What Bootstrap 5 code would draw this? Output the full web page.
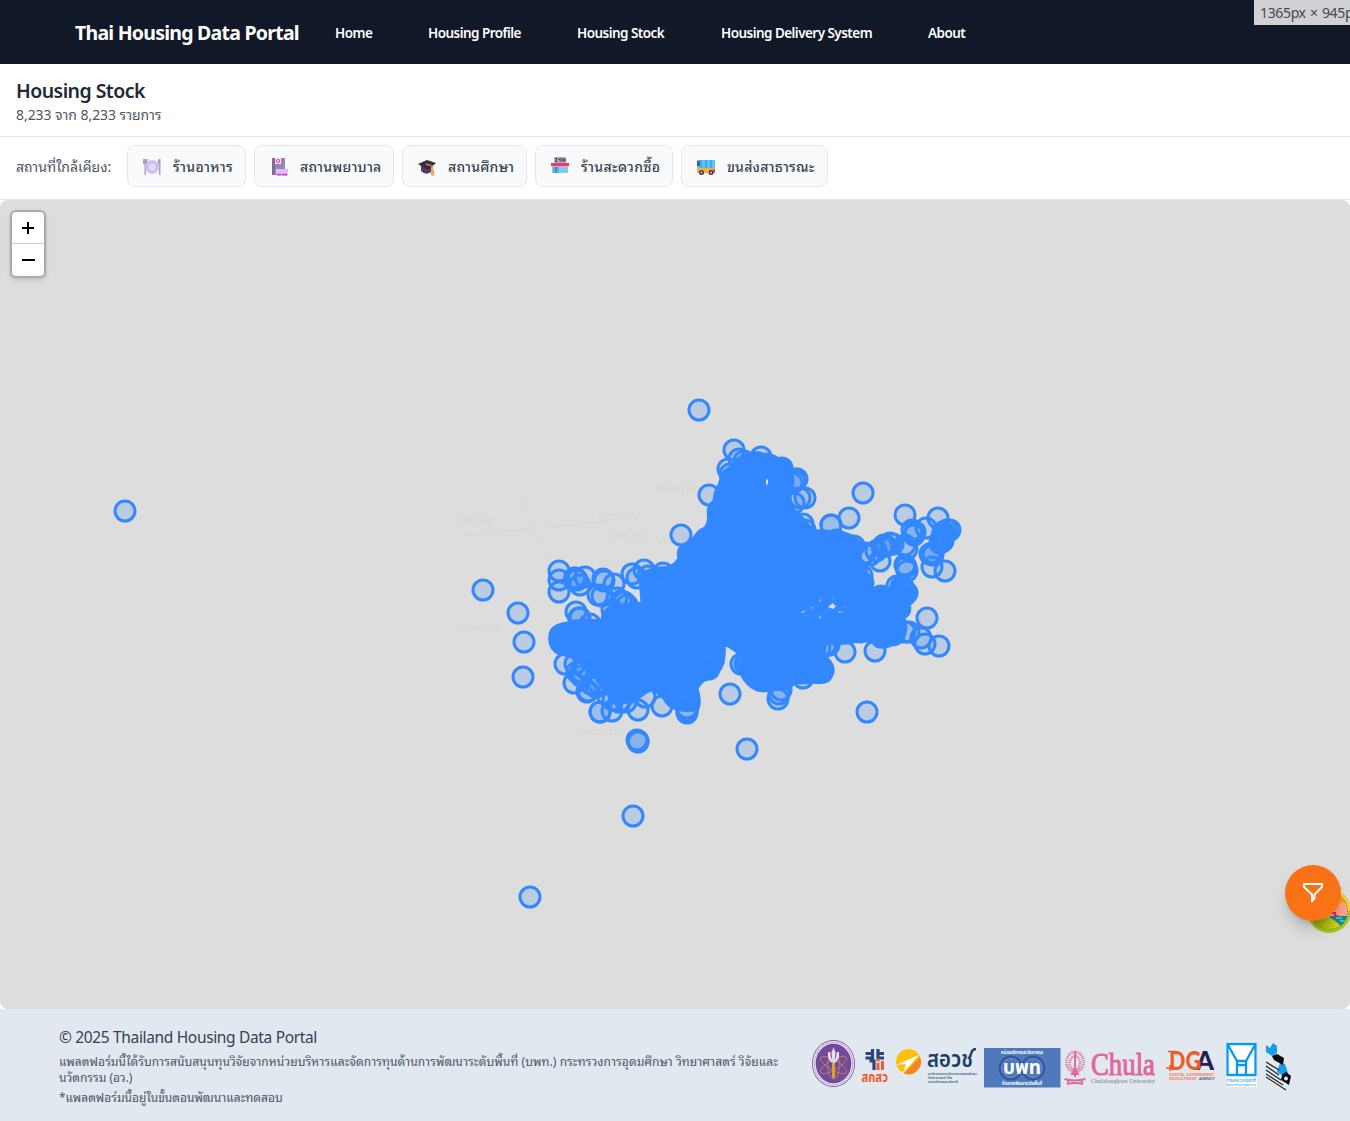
<!DOCTYPE html>
<html lang="th">
<head>
<meta charset="utf-8">
<meta name="viewport" content="width=device-width, initial-scale=1">
<title>Thai Housing Data Portal</title>
<link href="https://cdn.jsdelivr.net/npm/bootstrap@5.3.0/dist/css/bootstrap.min.css" rel="stylesheet">
<style>
body{font-family:"Noto Sans","Noto Sans Thai Looped","Noto Sans Thai",sans-serif;background:#fff;width:1350px;height:1121px;overflow:hidden;position:relative}
.topbar{height:64px;background:#111827;padding-left:75px;color:#fff}
.brand-name{font-size:19.500px;font-weight:700;width:260px;letter-spacing:-.76px;white-space:nowrap;padding-top:2px}
.menu{gap:56px;font-size:13.500px;font-weight:600;padding-top:3px}
.menu a{color:#fff;text-decoration:none;white-space:nowrap;letter-spacing:-.54px}
.m1{width:37px}.m2{width:93px}.m3{width:88px}.m4{width:151px}.m5{width:38px}
.sizetip{position:absolute;right:0;top:0;width:96px;height:25px;background:#d0d1d5;color:#45474c;font-size:14px;line-height:26px;padding-left:6px;overflow:hidden;white-space:nowrap;letter-spacing:-.35px;word-spacing:1px}
.headline{height:73px;border-bottom:1px solid #e5e7eb;padding:13px 16px 0}
.headline h1{font-size:19.500px;line-height:28px;font-weight:600;color:#1f2937;margin:0;letter-spacing:-.55px}
.headline p{font-size:14px;line-height:20px;color:#4b5563;margin:0;letter-spacing:-.05px}
.nearby{height:63px;border-bottom:1px solid #e5e7eb;padding:8px 16px 0;gap:8px;font-size:14px;color:#4b5563}
.nearby-label{width:103px;height:42px;line-height:43px;white-space:nowrap}
.chip{height:42px;border:1px solid #e5e7eb;border-radius:8px;background:#f9fafb;color:#374151;padding-left:14px;gap:11px;font-weight:500;white-space:nowrap;letter-spacing:.2px}
.chip svg{margin-top:2px}
.c1{width:119px;letter-spacing:.3px}.c2{width:140px}.c3{width:125px}.c4{width:138px;letter-spacing:.3px}.c5{width:147px}
.mapbox{height:809px;background:#ddd;border-radius:8px;position:relative;overflow:hidden}
.mapbox>svg{display:block}
.zoomer{position:absolute;left:10px;top:10px;width:36px;height:68px;border:2px solid #aaa;border-radius:6px;background:#fff;box-shadow:0 2px 4px #0002}
.zoomer div{height:32px}
.zoomer div:first-child{border-bottom:1px solid #ccc}
.floater{position:absolute;left:1285px;top:665px;width:56px;height:56px;border-radius:50%;background:#f97316;box-shadow:0 10px 15px -3px #0003,0 4px 6px -4px #0003}
.scenery{position:absolute;left:1306px;top:689px}
.foot{height:112px;background:#e2e8f0;padding:18px 0 0 59px;color:#374151}
.foot-text{width:752px}
.foot-text .copyr{font-size:15.500px;line-height:21px;letter-spacing:-.34px}
.foot-text p{font-size:12px;line-height:16px;margin:6px 0 0;white-space:nowrap;color:#4b5563}
.foot-text p+p{margin-top:4px}
.f1{letter-spacing:.08px}.f3{letter-spacing:0}
.logos{padding-top:10px;font-family:"Noto Sans","Noto Sans Thai",sans-serif}
.logos svg{display:block;flex:none;overflow:visible}
</style>
</head>
<body>
<nav class="topbar d-flex align-items-center">
<div class="brand-name">Thai Housing Data Portal</div>
<div class="menu d-flex"><a class="m1" href="#">Home</a><a class="m2" href="#">Housing Profile</a><a class="m3" href="#">Housing Stock</a><a class="m4" href="#">Housing Delivery System</a><a class="m5" href="#">About</a></div>
</nav>
<div class="sizetip">1365px × 945px</div>
<header class="headline"><h1>Housing Stock</h1><p>8,233 จาก 8,233 รายการ</p></header>
<section class="nearby d-flex">
<div class="nearby-label">สถานที่ใกล้เคียง:</div>
<div class="chip c1 d-flex align-items-center"><svg width="20" height="20" viewBox="0 0 20 20"><path d="M1 2v5h1.500v11h1.500V7H5.500V2zM16 3q2-2 2.500-1v16H17v-7h-1.500z" fill="#aaa0bd"/><circle cx="10.300" cy="10" r="7" fill="#d3c5f3"/><circle cx="10.300" cy="10" r="4.500" fill="#e5d8fb" stroke="#bfaee7"/></svg><span>ร้านอาหาร</span></div>
<div class="chip c2 d-flex align-items-center"><svg width="20" height="20" viewBox="0 0 20 20"><path d="M3 1h13v17H3z" fill="#9b83b3"/><path d="M3 1h3v17H3z" fill="#84699f"/><path d="M6 1h6v6H6z" fill="#fbe4f7"/><circle cx="9" cy="4" r="1.500" stroke="#e03a9c" stroke-width="1.200" fill="#fff"/><path d="M7 12h12v7H7z" fill="#d8c3f4"/><path d="M8 17.500h4m1 0h5" stroke="#dc32ba" stroke-width="1.600"/></svg><span>สถานพยาบาล</span></div>
<div class="chip c3 d-flex align-items-center"><svg width="20" height="20" viewBox="0 0 20 20"><path d="M4 8v6q5 5 10 1V8z" fill="#5a3a70"/><path d="M1 7l9-4 9 3-8 7z" fill="#372b41"/><path d="M9 7l6 2v6" fill="none" stroke="#d98035" stroke-width="1.500"/><path d="M14 13h3v6l-3-1z" fill="#f7a052"/></svg><span>สถานศึกษา</span></div>
<div class="chip c4 d-flex align-items-center"><svg width="20" height="20" viewBox="0 0 20 20"><path d="M4 0h12v6H4z" fill="#bcaeca"/><path d="M5 1.500h2L5.500 4.500H7.500M9 1v2h2m0-2v4M13 1v4m2-4v4m-2-2h2" stroke="#4d3b60" fill="none"/><path d="M2 9h16v7H2z" fill="#c3b3cf"/><path d="M1 6h18v3H1z" fill="#ed3a66"/><path d="M3 10h6v6H3z" fill="#40bce9"/><path d="M6 10v6" stroke="#5466a8"/><path d="M10 11h7v4h-7z" fill="#65d6ee"/></svg><span>ร้านสะดวกซื้อ</span></div>
<div class="chip c5 d-flex align-items-center"><svg width="20" height="20" viewBox="0 0 20 20"><path d="M1 3h18v13H1z" fill="#ffae2b"/><path d="M1 3h18v8H1z" fill="#5ac5fb"/><path d="M5 3v8m5-8v8m5-8v8" stroke="#2f88d8"/><path d="M1 4h3v5H1z" fill="#346ca0"/><path d="M17 12h2v4h-2z" fill="#ef4668"/><circle cx="5.500" cy="15.500" r="2.500" fill="#4a3456"/><circle cx="15" cy="15.500" r="2.500" fill="#4a3456"/><circle cx="5.500" cy="15.500" r="1" fill="#d7c5de"/><circle cx="15" cy="15.500" r="1" fill="#d7c5de"/></svg><span>ขนส่งสาธารณะ</span></div>
</section>
<main class="mapbox">
<svg id="dots" width="1350" height="809" viewBox="0 200 1350 809">
<g opacity=".018" font-size="11" fill="#000"><text x="655" y="492">ปากเกร็ด</text><text x="598" y="520">เสาธงหิน</text><text x="610" y="538">บางใหญ่</text><text x="656" y="544">นนทบุรี</text><text x="598" y="566">ปลายบาง</text><text x="458" y="524">ไร่ขิงพลู</text><text x="458" y="631">สามพราน</text><text x="580" y="735">สมุทรสาคร</text><path d="M456 536L620 520M516 485L548 560M460 572h88" stroke="#000" fill="none" opacity=".6"/></g>
<path fill="#38f" stroke="#38f" stroke-width="3" stroke-linejoin="round" d="M731 467Q741 456 750 454Q757 451 763 454Q772 454 779 459Q788 461 791 467L793 481L789 500Q791 509 798 513L813 531Q824 530 833 532Q847 531 853 538Q862 541 861 548L858 557Q866 567 867 574Q873 582 872 591Q882 587 889 590Q893 580 899 582Q909 580 913 588Q917 597 909 605Q912 613 904 618Q908 627 904 637Q901 645 892 645Q884 649 876 646Q871 639 861 642Q853 641 848 643L826 644Q822 655 827 658Q838 669 829 680Q823 684 812 682Q800 684 795 682Q789 691 778 689L764 691Q755 691 748 684Q741 677 740 668L742 658Q737 650 724 644Q725 653 723 663Q720 673 708 679Q701 680 697 689Q701 699 698 709Q687 712 677 709Q669 708 663 697L653 689L645 693Q638 699 630 700Q620 707 609 696L597 680L587 663Q573 656 560 654Q548 649 550 635Q551 625 567 623Q577 619 602 621Q602 609 614 606L642 603L640 577Q648 569 657 568Q674 569 679 558Q675 546 691 543Q697 531 705 528Q710 522 708 511Q709 505 714 501Q715 490 719 485Q721 475 731 467Z"/>
<g fill="#ddd"><path d="M766 480l2-1v5l-2 1zM828 607l5-4 1 2 2 1-3 3zM724.500 647l10 5-5-1zM801 612l6-2-5 3z"/><path d="M810 608l5-2-4 3zM819 600l3-1-3 3zM841 606l5 2-4-1zM818 615l4 3-2 1zM833 596l1 3-1 1zM839 611l6 1-7 1z" opacity=".6"/></g>
<g id="rings" fill="#38f" fill-opacity=".2" stroke="#38f" stroke-width="3"></g>
</svg>
<div class="zoomer"><div class="d-flex align-items-center justify-content-center"><svg width="14" height="14" viewBox="0 0 14 14"><path d="M7 1v12M1 7h12" stroke="#000" stroke-width="2"/></svg></div><div class="d-flex align-items-center justify-content-center"><svg width="14" height="14" viewBox="0 0 14 14"><path d="M1 7h13" stroke="#000" stroke-width="2"/></svg></div></div>
<svg class="scenery" width="46" height="46" viewBox="0 0 46 46"><defs><clipPath id="sc"><circle cx="23" cy="22" r="19"/></clipPath><linearGradient id="hill"><stop stop-color="#709c10"/><stop offset="1" stop-color="#e3d91a"/></linearGradient></defs><circle cx="23" cy="22" r="22" fill="#a7c51d"/><path d="M23 0a22 22 0 0 1 22 22h-8L25 4z" fill="#f5cf3f"/><g clip-path="url(#sc)"><path d="M0 0h46v46H0z" fill="#ffa386"/><path d="M20 0h26v14H20z" fill="#ffd047"/><path d="M29 9l4-5 13 10H32z" fill="#f7a719"/><path d="M24 27h22v15H24z" fill="#098d9c"/><path d="M30 29h6m-2 3h8" stroke="#8ce7dd"/><path d="M23 24h6v3h3" stroke="#df2765" stroke-width="2" fill="none"/><path d="M0 32Q18 19 36 38v10H0z" fill="url(#hill)"/></g><circle cx="23" cy="22" r="18.500" fill="none" stroke="#574b16" stroke-dasharray="1 1.500" opacity=".6"/></svg>
<div class="floater d-flex align-items-center justify-content-center"><svg width="24" height="24" viewBox="0 0 24 24" fill="none" stroke="#fff" stroke-width="2" stroke-linejoin="round"><path d="M3 3h18v3l-7.500 7.500v3.500L11 20.500v-7L3 6z"/></svg></div>
</main>
<footer class="foot d-flex">
<div class="foot-text"><div class="copyr">© 2025 Thailand Housing Data Portal</div><p><span class="f1">แพลตฟอร์มนี้ได้รับการสนับสนุนทุนวิจัยจากหน่วยบริหารและจัดการทุนด้านการพัฒนาระดับพื้นที่ (บพท.) กระทรวงการอุดมศึกษา วิทยาศาสตร์ วิจัยและ</span><br><span class="f2">นวัตกรรม (อว.)</span></p><p><span class="f3">*แพลตฟอร์มนี้อยู่ในขั้นตอนพัฒนาและทดสอบ</span></p></div>
<div class="logos d-flex">
<svg width="46" height="56" viewBox="811 1037 46 56"><ellipse cx="833.500" cy="1063.500" rx="21.500" ry="23.500" fill="#724a9c"/><ellipse cx="833.500" cy="1063.500" rx="19.300" ry="21.300" fill="none" stroke="#e9e1f2" stroke-width="3"/><ellipse cx="833.500" cy="1063.500" rx="19.300" ry="21.300" fill="none" stroke="#8b6dad" stroke-dasharray="1 1"/><g fill="none" stroke="#c4864d" stroke-width=".8"><ellipse cx="833.500" cy="1065" rx="15" ry="5" transform="rotate(30 833.500 1065)"/><ellipse cx="833.500" cy="1065" rx="15" ry="5" transform="rotate(-30 833.500 1065)"/><ellipse cx="833.500" cy="1065" rx="6" ry="14"/></g><path d="M833.500 1047l2 6-1 10h-2l-1-10zM828 1052q-1 9 5 11-2-4-3-11zM839 1052q1 9-5 11 2-4 3-11z" fill="#e6dfed"/><path d="M832 1063h3v14l-1.500 2-1.500-2z" fill="#e0a131"/></svg>
<svg width="35" height="56" viewBox="857 1037 35 56"><path d="M872.500 1049v9h-7m0-4.500h7M878 1049v4.500h6m-6-4.500v9h6M869.500 1061h4.500v9" fill="none" stroke="#29477c" stroke-width="3.200"/><path d="M878 1058.500v3m0 1.500v7m4.500-9v9" stroke="#f15b39" stroke-width="3"/><text x="861.500" y="1082" font-size="14" font-weight="700" fill="#f15b2d" textLength="26.500" lengthAdjust="spacingAndGlyphs">สกสว</text></svg>
<svg width="88" height="56" viewBox="892 1037 88 56"><circle cx="908.500" cy="1061.500" r="12.500" fill="#ffc107"/><path d="M920 1057a12.500 12.500 0 0 1-16 16.500z" fill="#ef8524"/><path d="M919 1055l-23 10 10-1-3 9z" fill="#fff"/><text x="927" y="1067" font-size="23" font-weight="600" fill="#203e64" textLength="46" lengthAdjust="spacingAndGlyphs">สอวช</text><path d="M971 1054q1-5 5-5" stroke="#203e64" stroke-width="2.500" fill="none"/><g font-size="4" fill="#425d7b" font-weight="600"><text x="928" y="1075" textLength="49" lengthAdjust="spacingAndGlyphs">สำนักงานสภานโยบายการอุดมศึกษา</text><text x="928" y="1079" textLength="24" lengthAdjust="spacingAndGlyphs">วิทยาศาสตร์ วิจัย</text><text x="928" y="1083" textLength="30" lengthAdjust="spacingAndGlyphs">และนวัตกรรมแห่งชาติ</text></g></svg>
<svg width="82" height="56" viewBox="980 1037 82 56"><path d="M984 1048h76.500v39.500H984z" fill="#4f79bb"/><g fill="none" stroke="#345a9e" stroke-width="3"><circle cx="1011" cy="1068" r="11"/><circle cx="1033" cy="1068" r="11"/></g><g fill="none" stroke="#7391ce"><circle cx="1011" cy="1068" r="9.500"/><circle cx="1033" cy="1068" r="9.500"/></g><g fill="#fff" font-weight="700"><text x="1003" y="1074" font-size="20" textLength="38" lengthAdjust="spacingAndGlyphs">บพท</text><text x="1001" y="1054" font-size="4.500" textLength="42" lengthAdjust="spacingAndGlyphs">หน่วยบริหารและจัดการทุน</text><text x="1002" y="1085" font-size="4.500" textLength="40" lengthAdjust="spacingAndGlyphs">ด้านการพัฒนาระดับพื้นที่</text></g></svg>
<svg width="96" height="56" viewBox="1062 1037 96 56"><g fill="none" stroke="#df6b9c"><ellipse cx="1075" cy="1062" rx="8.500" ry="10" stroke-width="3" stroke-dasharray="1 1"/><ellipse cx="1075" cy="1063" rx="5" ry="7" stroke-width="2" stroke-dasharray="1 .7"/><path d="M1075 1051v26M1072 1074l3-6 3 6z" stroke-width="2"/><path d="M1064.500 1079q10.500 3 21 0M1067 1084q8-2 16 0M1068 1080v3m14-3v3" stroke-width="2"/></g><text x="1091" y="1075" font-family="Liberation Serif" font-size="32" fill="#e0679b" stroke="#e0679b" stroke-width="1" textLength="64" lengthAdjust="spacingAndGlyphs">Chula</text><text x="1091" y="1083" font-family="Liberation Serif" font-size="6.500" fill="#777f88" textLength="64" lengthAdjust="spacingAndGlyphs">Chulalongkorn University</text></svg>
<svg width="62" height="56" viewBox="1158 1037 62 56"><g font-family="Lato" font-weight="900" font-size="27"><text x="1196" y="1070" fill="#251e51" textLength="18" lengthAdjust="spacingAndGlyphs">A</text><text x="1169" y="1070" fill="#f15a29" textLength="32" lengthAdjust="spacingAndGlyphs">DG</text></g><path d="M1168 1051.500h8m-10 16.500h10m-6-3v6" stroke="#f15a29" stroke-width="1.500"/><g font-size="3.500" fill="#ed7958" font-weight="600"><text x="1169" y="1076" textLength="45" lengthAdjust="spacingAndGlyphs">DIGITAL GOVERNMENT</text><text x="1169" y="1080" textLength="28" lengthAdjust="spacingAndGlyphs">DEVELOPMENT</text><text x="1199" y="1080" fill="#514b76" textLength="16" lengthAdjust="spacingAndGlyphs">AGENCY</text></g></svg>
<svg width="41" height="56" viewBox="1220 1037 41 56"><path d="M1226 1042h31v45h-31z" fill="#fff"/><path d="M1227.500 1044h28v31h-28zM1228 1045l9 16h9l9-16M1237 1061v13m9-13v13M1237 1065h9" fill="none" stroke="#0899ee" stroke-width="2.300"/><g fill="#0899ee"><text x="1226" y="1082" font-size="6" textLength="30" lengthAdjust="spacingAndGlyphs">การเคหะแห่งชาติ</text><text x="1226" y="1086" font-size="3" textLength="30" lengthAdjust="spacingAndGlyphs">National Housing Authority</text></g></svg>
<svg width="34" height="56" viewBox="1261 1037 34 56"><path d="M1266 1045l4 3 3-5 4 3v7l-5 3-6-4zM1280 1063l5 1 3 9-5 3-6-4z" fill="#159eea"/><path d="M1272 1056l5-2 7 4-1 7-9-5zM1282 1075l4-3 5 4-2 9-8-5z" fill="#080b0e"/><circle cx="1286" cy="1078.500" r="2" fill="#e2e8f0"/><path d="M1266 1062l13 8M1266 1066l13 9m-13-5l15 10m-15-6l17 11m-17-8l20 13" stroke="#202429" stroke-width="1.200"/></svg>
</div>
</footer>
<script src="https://cdn.jsdelivr.net/npm/bootstrap@5.3.0/dist/js/bootstrap.bundle.min.js"></script>
<script>
const points=[[699,410],[125,511],[483,590],[518,613],[524,642],[523,677],[747,749],[633,816],[530,897],[867,712],[730,694],[863,493],[849,518],[831,525],[831,525],[905,515],[681,535],[709,495],[734,450],[739,459],[744,461],[728,469],[730,474],[732,478],[761,457],[782,468],[797,479],[796,479],[795,481],[792,483],[805,498],[800,498],[794,503],[803,524],[805,530],[559,571],[559,580],[559,592],[575,578],[575,578],[577,580],[585,577],[580,585],[603,579],[604,581],[614,584],[598,595],[602,596],[632,574],[637,578],[644,570],[648,576],[663,573],[576,612],[579,618],[580,618],[590,624],[617,598],[621,601],[624,602],[627,605],[612,610],[565,664],[575,664],[577,672],[581,672],[585,668],[574,683],[581,676],[591,684],[596,687],[598,683],[587,692],[588,691],[607,695],[613,700],[619,702],[626,702],[600,712],[600,712],[612,711],[638,710],[662,706],[687,713],[687,711],[687,708],[645,697],[637,740],[638,742],[638,741],[709,669],[938,518],[926,528],[915,532],[914,535],[912,530],[950,530],[947,530],[944,536],[943,541],[941,540],[943,532],[945,533],[940,543],[942,537],[931,554],[933,555],[930,554],[932,553],[932,567],[945,571],[905,565],[906,567],[907,571],[907,549],[905,545],[880,561],[884,545],[886,546],[893,544],[890,543],[882,547],[876,551],[870,555],[865,553],[854,546],[848,545],[841,543],[836,540],[897,586],[903,587],[901,587],[907,593],[905,595],[881,596],[884,598],[863,583],[862,576],[927,618],[939,646],[925,644],[921,638],[909,632],[905,632],[845,652],[875,651],[825,646],[829,645],[820,648],[741,664],[745,664],[747,666],[803,678],[778,699],[779,694],[781,690]];
document.getElementById('rings').innerHTML=points.map(p=>`<circle cx="${p[0]}" cy="${p[1]}" r="10"/>`).join('');
</script>
</body>
</html>
